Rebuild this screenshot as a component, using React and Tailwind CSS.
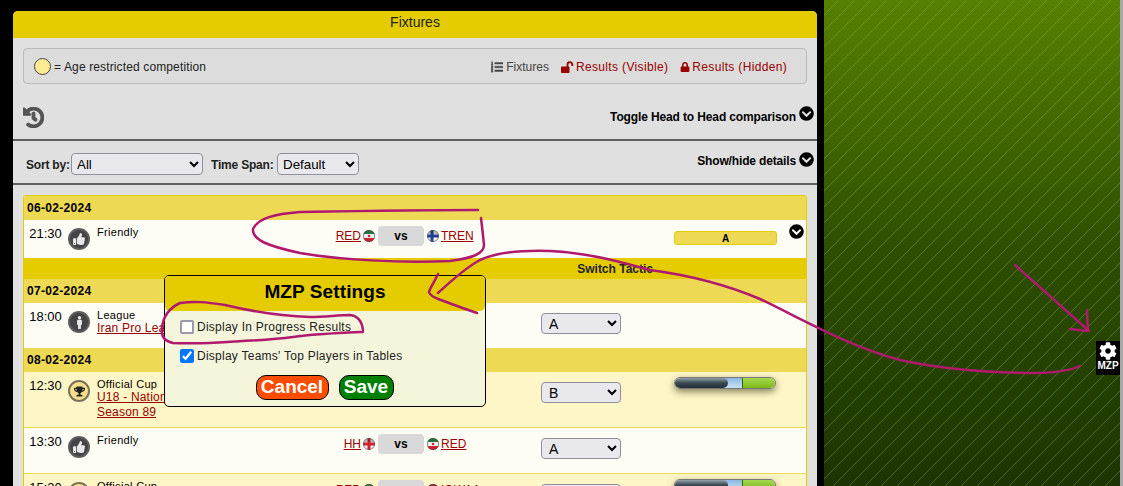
import React from 'react';
import {
  FaChevronCircleDown, FaCog, FaHistory, FaListOl, FaLock, FaMale, FaThumbsUp, FaTrophy,
} from 'react-icons/fa';

const FlagBall = ({ kind }) => (
  <svg width="12" height="12" viewBox="0 0 12 12" className="shrink-0">
    <defs>
      <clipPath id={`ball-${kind}`}><circle cx="6" cy="6" r="6" /></clipPath>
    </defs>
    <g clipPath={`url(#ball-${kind})`}>
      {kind === 'iran' && (
        <>
          <rect width="12" height="4" fill="#2f8f4e" />
          <rect y="4" width="12" height="4" fill="#f4f4f4" />
          <rect y="8" width="12" height="4" fill="#d3202f" />
          <circle cx="6" cy="6" r="1.3" fill="#d3202f" />
        </>
      )}
      {kind === 'finland' && (
        <>
          <rect width="12" height="12" fill="#f2f2f2" />
          <rect y="4.5" width="12" height="3" fill="#1d3f94" />
          <rect x="3.5" width="3" height="12" fill="#1d3f94" />
        </>
      )}
      {kind === 'england' && (
        <>
          <rect width="12" height="12" fill="#f2f2f2" />
          <rect y="4.5" width="12" height="3" fill="#d3202f" />
          <rect x="4.5" width="3" height="12" fill="#d3202f" />
        </>
      )}
      {kind === 'red' && <rect width="12" height="12" fill="#c8202f" />}
      <rect width="12" height="4" fill="#000" opacity="0.2" />
    </g>
    <circle cx="6" cy="6" r="5.6" fill="none" stroke="#555" strokeWidth="0.7" />
  </svg>
);

// open padlock, body on the left and shackle swung out to the right
const OpenLock = () => (
  <svg width="13" height="12" viewBox="0 0 13 12" className="mr-[2px] shrink-0">
    <rect x="0" y="5.5" width="8.5" height="6.5" rx="1" fill="currentColor" />
    <path d="M6.5 6V3.5a2.4 2.4 0 0 1 4.8 0V5" fill="none" stroke="currentColor" strokeWidth="1.8" />
  </svg>
);

const TypeBadge = ({ type }) => {
  if (type === 'cup') {
    return (
      <span className="flex h-[22px] w-[22px] items-center justify-center rounded-full border-2 border-[#77735a] bg-[#fbe08c] text-[#222]">
        <FaTrophy size={11} />
      </span>
    );
  }
  return (
    <span className="flex h-[22px] w-[22px] items-center justify-center rounded-full border-2 border-[#5d5d5d] bg-[#444] text-[#e8e8e8]">
      {type === 'league' ? <FaMale size={13} /> : <FaThumbsUp size={12} />}
    </span>
  );
};

const TacticSelect = ({ value }) => (
  <select
    defaultValue={value}
    className="h-[21px] w-[80px] rounded-[4px] border border-[#8f8f9d] bg-[#e9e9ed] pl-[3px] text-[14px] text-black"
  >
    <option>{value}</option>
  </select>
);

const TacticBar = () => (
  <div className="flex h-[12px] w-[102px] overflow-hidden rounded-full border border-[#777] shadow-[0_3px_7px_rgba(60,60,30,0.6)]">
    <div className="relative z-10 w-[53px] rounded-r-full bg-gradient-to-b from-[#95a4ab] via-[#3a4952] via-50% to-[#222f38]" />
    <div className="-ml-[4px] w-[18px] bg-gradient-to-b from-[#8fb8e0] to-[#c7e2f7]" />
    <div className="w-[1px] bg-[#2f6b00]" />
    <div className="flex-1 bg-gradient-to-b from-[#a4d94e] to-[#7fb80e]" />
  </div>
);

const MatchRow = ({ time, type, comp, link, link2, home, homeFlag, away, awayFlag, tactic, bar, cup, pill, chevron, className }) => (
  <div className={`flex items-start ${cup ? 'bg-[#fef6c6]' : 'bg-[#fefdf5]'} ${className}`}>
    <span className="mt-[6px] w-[43px] text-center text-[13px] leading-[16px] text-black">{time}</span>
    <span className="mt-[8px] ml-[1px] w-[29px]"><TypeBadge type={type} /></span>
    <div className="mt-[6px] w-[181px] shrink-0 text-[11px] leading-[12px] tracking-[0.3px] text-black">
      <div>{comp}</div>
      {link && <div className="text-[12px] leading-[15px] tracking-[0.2px] text-[#990000] underline">{link}</div>}
      {link2 && <div className="text-[12px] leading-[15px] tracking-[0.2px] text-[#990000] underline">{link2}</div>}
    </div>
    <div className="mt-[6px] flex w-[263px] shrink-0 items-start">
      {home && (
        <>
          <div className="flex w-[100px] items-center justify-end gap-[2px] pt-[2px] pr-[3px] text-[12px] leading-[15px]">
            <span className="mt-[1px] text-[#990000] underline">{home}</span>
            <FlagBall kind={homeFlag} />
          </div>
          <span className="flex h-[20px] w-[46px] items-center justify-center rounded-[4px] bg-[#d9d9d9] text-[12px] font-bold text-black">vs</span>
          <div className="flex items-center gap-[2px] pt-[2px] pl-[3px] text-[12px] leading-[15px]">
            <FlagBall kind={awayFlag} />
            <span className="mt-[1px] text-[#990000] underline">{away}</span>
          </div>
        </>
      )}
    </div>
    <div className="mt-[10px] w-[133px] shrink-0">{tactic && <TacticSelect value={tactic} />}</div>
    <div className="mt-[5px]">
      {bar && <TacticBar />}
      {pill && (
        <div className="mt-[6px] flex h-[14px] w-[103px] items-center justify-center rounded-[3px] border border-[#e5cc00] bg-[#eed955] text-[10px] font-bold text-black">
          {pill}
        </div>
      )}
    </div>
    {chevron && <FaChevronCircleDown size={15} className="mt-[4px] ml-[12px] text-black" />}
  </div>
);

const DateRow = ({ children, className }) => (
  <div className={`flex items-center bg-[#eed955] pl-[3px] text-[12px] font-bold tracking-[0.3px] text-black ${className}`}>{children}</div>
);

const Ink = () => (
  <svg className="pointer-events-none absolute inset-0 z-20" width="1123" height="486" fill="none" stroke="#b01a6e" strokeWidth="2.5" strokeLinecap="round" strokeLinejoin="round">
    <path d="M478 210C420 210 360 211 300 212C275 214 258 218 253 229C252 240 268 246 300 253C340 260 400 263 450 261C472 258 484 254 484 245C483 235 482 226 481 218" />
    <path d="M363 332C340 333 315 334 293 337C270 340 245 341 227 342C205 343 190 344 173 343C163 341 161 335 162 328C163 318 167 309 180 303C195 301 205 302 225 305C250 311 280 316 310 317C325 317 338 315 350 315C359 316 362 322 363 330" />
    <path d="M438 293C450 282 465 268 480 260C495 253 520 250 550 251C590 253 620 262 650 270C680 274 720 282 760 299C800 318 850 347 900 360C950 371 1000 373 1040 373C1060 372 1072 370 1080 366" />
    <path d="M438 274C435 281 431 286 429 292C430 296 434 297 438 299C452 304 465 309 477 313" />
    <path d="M1015 265L1089 331" />
    <path d="M1087 310L1088 331L1070 329" />
  </svg>
);

const App = () => (
  <div className="relative flex h-[486px] w-[1123px] overflow-hidden bg-black font-['Liberation_Sans',Arial,sans-serif] text-[12px]">
    <div className="w-[824px] shrink-0 pt-[11px] pr-[7px] pl-[13px]">
      <div className="h-[475px] overflow-hidden rounded-t-[5px] bg-[#e0e0e0]">
        <div className="flex h-[27px] items-center justify-center bg-[#e5cc00] pb-[4px] text-[14px] text-[#222]">Fixtures</div>

        <div className="mx-[10px] mt-[10px] flex h-[36px] items-center rounded-[4px] border border-[#bbbbbb] bg-[#dcdcdc] pl-[10px] text-[#222]">
          <span className="h-[17px] w-[17px] rounded-full border border-[#444] bg-[#fdeb94]" />
          <span className="mt-[1px] ml-[3px] tracking-[0.13px]">= Age restricted competition</span>
          <span className="mt-[1px] ml-auto flex items-center text-[#444]"><FaListOl size={12} stroke="currentColor" strokeWidth={20} className="mr-[3px]" />Fixtures</span>
          <span className="mt-[1px] ml-[12px] flex items-center tracking-[0.35px] text-[#990000]"><OpenLock />Results (Visible)</span>
          <span className="mt-[1px] mr-[19px] ml-[12px] flex items-center tracking-[0.33px] text-[#990000]"><FaLock size={10} className="mr-[2px]" />Results (Hidden)</span>
        </div>

        <div className="flex h-[57px] items-start border-b-2 border-[#606060] pt-[23px] pr-[3px] pl-[10px]">
          <FaHistory size={21} stroke="currentColor" strokeWidth={30} className="text-[#555]" />
          <span className="mt-[1px] ml-auto font-bold tracking-[-0.13px] text-black">Toggle Head to Head comparison</span>
          <FaChevronCircleDown size={15} className="-mt-[1px] ml-[3px] text-black" />
        </div>

        <div className="flex h-[44px] items-start border-b-2 border-[#606060] pt-[12px] pr-[3px] pl-[13px] font-bold text-[#222]">
          <span className="mt-[3px] w-[45px] tracking-[-0.2px]">Sort by:</span>
          <select defaultValue="All" className="h-[22px] w-[132px] rounded-[4px] border border-[#8f8f9d] bg-[#e9e9ed] pl-[1px] text-[13.33px] font-normal text-black">
            <option>All</option>
          </select>
          <span className="mt-[3px] ml-[8px] w-[66px] tracking-[-0.2px]">Time Span:</span>
          <select defaultValue="Default" className="h-[22px] w-[82px] rounded-[4px] border border-[#8f8f9d] bg-[#e9e9ed] pl-[1px] text-[13.33px] font-normal text-black">
            <option>Default</option>
          </select>
          <span className="-mt-[1px] ml-auto font-bold tracking-[-0.15px] text-black">Show/hide details</span>
          <FaChevronCircleDown size={15} className="-mt-[1px] ml-[3px] text-black" />
        </div>

        <div className="mx-[10px] mt-[10px] overflow-hidden rounded-t-[3px] border border-[#e5cc00]">
          <DateRow className="h-[24px]">06-02-2024</DateRow>
          <MatchRow
            className="h-[38px]"
            time="21:30"
            type="friendly"
            comp="Friendly"
            home="RED"
            homeFlag="iran"
            away="TREN"
            awayFlag="finland"
            pill="A"
            chevron
          />
          <div className="flex h-[21px] items-center justify-end bg-[#e5cc00] pr-[153px] font-bold text-[#222]">Switch Tactic</div>
          <DateRow className="h-[24px]">07-02-2024</DateRow>
          <MatchRow className="h-[45px]" time="18:00" type="league" comp="League" link="Iran Pro League" tactic="A" />
          <DateRow className="h-[24px]">08-02-2024</DateRow>
          <MatchRow className="h-[56px] border-b border-[#eed955]" time="12:30" type="cup" comp="Official Cup" link="U18 - National Cup" link2="Season 89" tactic="B" bar cup />
          <MatchRow className="h-[46px] border-b border-[#eed955]" time="13:30" type="friendly" comp="Friendly" home="HH" homeFlag="england" away="RED" awayFlag="iran" tactic="A" />
          <MatchRow className="h-[56px]" time="15:30" type="cup" comp="Official Cup" home="RED" homeFlag="iran" away="IOWAA" awayFlag="red" tactic="A" bar cup />
        </div>
      </div>
    </div>

    <div className="flex-1 bg-[repeating-linear-gradient(135deg,transparent_0,transparent_10.3137px,rgba(150,190,50,0.38)_10.3137px,rgba(150,190,50,0.38)_11.3137px),linear-gradient(180deg,#568000_0%,#2e5000_50%,#1c3400_100%)]" />
    <div className="w-[3px] bg-[#a8a8a8]" />

    <div className="absolute top-[275px] left-[164px] z-10 h-[132px] w-[322px] overflow-hidden rounded-[5px] border border-black bg-[#f5f5dc]">
      <div className="flex h-[35px] items-center justify-center rounded-b-[5px] bg-[#e5cc00] pb-[3px] text-[19px] font-bold tracking-[0.1px] text-black">MZP Settings</div>
      <label className="mt-[7px] ml-[15px] flex items-center gap-[3px] tracking-[0.25px] text-[#222]">
        <input type="checkbox" className="h-[14px] w-[14px] appearance-none rounded-[2px] border-2 border-[#9a9aa8] bg-white" />
        Display In Progress Results
      </label>
      <label className="mt-[11px] ml-[15px] flex items-center gap-[3px] tracking-[0.25px] text-[#222]">
        <input type="checkbox" defaultChecked className="h-[14px] w-[14px]" />
        Display Teams' Top Players in Tables
      </label>
      <div className="mt-[10px] flex justify-center gap-[10px] pr-[1px]">
        <span className="flex h-[25px] w-[73px] items-center justify-center rounded-[10px] border border-black bg-[#ff4d00] text-[19px] font-bold text-white">Cancel</span>
        <span className="flex h-[25px] w-[55px] items-center justify-center rounded-[10px] border border-black bg-[#008000] text-[19px] font-bold text-white">Save</span>
      </div>
    </div>

    <div className="absolute top-[341px] left-[1096px] z-10 flex h-[34px] w-[24px] flex-col items-center bg-black pt-[1px] text-white">
      <FaCog size={18} />
      <span className="text-[10px] leading-[12px] font-bold">MZP</span>
    </div>

    <Ink />
  </div>
);

export default App;
